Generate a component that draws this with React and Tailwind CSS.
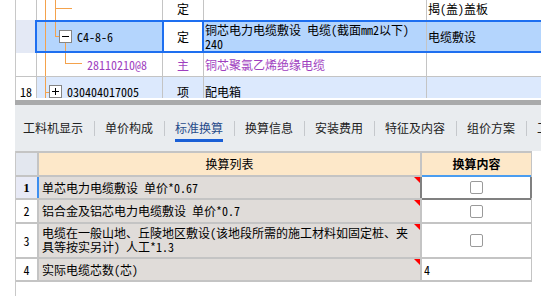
const OR = "#f4a24c";

function TreeBox({ plus }) {
  return (
    <span className="inline-flex w-[13px] h-[13px] border border-[#858585] bg-white shrink-0 items-center justify-center">
      <svg width="11" height="11" viewBox="0 0 11 11">
        <line x1="2" y1="5.5" x2="9" y2="5.5" stroke="#000" strokeWidth="1" />
        {plus && <line x1="5.5" y1="2" x2="5.5" y2="9" stroke="#000" strokeWidth="1" />}
      </svg>
    </span>
  );
}

function RedMark() {
  return (
    <svg className="absolute top-0 right-0" width="6" height="6" viewBox="0 0 6 6">
      <polygon points="0,0 6,0 6,6" fill="#ff0000" />
    </svg>
  );
}

function Check() {
  return <div className="w-[13px] h-[13px] border border-[#9a9a9a] rounded-[2px] bg-white" />;
}

function Tab({ label, active, last }) {
  return (
    <div className="flex items-center h-full">
      <div className={"relative h-full flex items-center " + (active ? "text-[#274b8a]" : "text-[#222]")}>
        {label}
        {active && <div className="absolute left-0 right-0 top-[34px] h-[3px] bg-[#1a5fd6]" />}
      </div>
      {!last && <div className="w-px h-[15px] bg-[#c5c8cc] ml-[11px] mr-[10px]" />}
    </div>
  );
}

export default function App() {
  const mono = "font-['Noto_Sans_Mono_CJK_SC','Noto_Sans_CJK_SC',sans-serif]";
  return (
    <div className={"w-[541px] h-[296px] flex flex-col bg-white overflow-hidden text-[12px] text-black " + mono}>
      {/* top grid */}
      <div className="h-[98px] overflow-hidden ml-[15px] border-l border-[#c8c8c8] flex flex-col shrink-0">
        {/* row A */}
        <div className="flex h-[20px] shrink-0 bg-white">
          <div className="w-[21px] border-r border-[#c4c4c4]" />
          <div className="relative w-[126px] border-r border-[#c4c4c4]">
            <svg className="absolute left-0 top-0" width="125" height="20">
              <line x1="8.5" y1="0" x2="8.5" y2="20" stroke={OR} />
              <line x1="18.5" y1="0" x2="18.5" y2="20" stroke={OR} />
              <line x1="18" y1="8.5" x2="35" y2="8.5" stroke={OR} />
            </svg>
          </div>
          <div className="w-[41px] border-r border-[#c4c4c4] flex items-center justify-center pb-[2px]">定</div>
          <div className="w-[223px] border-r border-[#c4c4c4]" />
          <div className="flex-1 flex items-center pl-[1px] pb-[2px]">揭(盖)盖板</div>
        </div>
        {/* selected row */}
        <div className="flex h-[33px] shrink-0">
          <div className="w-[19px] bg-[#e4e9f5]" />
          <div className="flex flex-1 border-2 border-r-0 border-[#1e6ff0] bg-[#b4d5fd]">
            <div className="relative w-[127px] border-r-2 border-[#1e6ff0] flex items-center pl-[22px]">
              <svg className="absolute left-0 top-0" width="125" height="29">
                <line x1="8.5" y1="0" x2="8.5" y2="29" stroke={OR} />
                <line x1="18.5" y1="0" x2="18.5" y2="14.5" stroke={OR} />
                <line x1="18" y1="14.5" x2="22" y2="14.5" stroke={OR} />
                <line x1="28.5" y1="20" x2="28.5" y2="29" stroke={OR} />
              </svg>
              <span className="relative"><TreeBox /></span>
              <span className="relative ml-[5px]">C4-8-6</span>
            </div>
            <div className="w-[40px] border-r-2 border-[#1e6ff0] bg-white flex items-center justify-center">定</div>
            <div className="w-[223px] border-r border-[#c4c4c4] flex flex-col justify-center pl-[1px] leading-[14px]">
              <div>铜芯电力电缆敷设 电缆(截面mm2以下)</div>
              <div>240</div>
            </div>
            <div className="flex-1 flex items-center pl-[1px] pt-[1px]">电缆敷设</div>
          </div>
        </div>
        {/* purple row */}
        <div className="flex h-[24px] shrink-0 border-b border-[#c4c4c4] bg-white text-[#9f3fbf]">
          <div className="w-[21px] border-r border-[#c4c4c4]" />
          <div className="relative w-[126px] border-r border-[#c4c4c4] flex items-center pl-[50px]">
            <svg className="absolute left-0 top-0" width="125" height="23">
              <line x1="8.5" y1="0" x2="8.5" y2="23" stroke={OR} />
              <line x1="28.5" y1="0" x2="28.5" y2="10.5" stroke={OR} />
              <line x1="28" y1="10.5" x2="45" y2="10.5" stroke={OR} />
            </svg>
            <span className="relative">28110210@8</span>
          </div>
          <div className="w-[41px] border-r border-[#c4c4c4] flex items-center justify-center">主</div>
          <div className="w-[223px] border-r border-[#c4c4c4] flex items-center pl-[1px]">铜芯聚氯乙烯绝缘电缆</div>
          <div className="flex-1" />
        </div>
        {/* row 18 (partly scrolled out of view) */}
        <div className="flex h-[21px] shrink-0 leading-[12px]">
          <div className="w-[21px] border-r border-[#c4c4c4] bg-white flex items-end justify-center">18</div>
          <div className="flex flex-1 bg-[#dce9fd]">
            <div className="relative w-[126px] border-r border-[#c4c4c4] flex items-end pl-[12px]">
              <svg className="absolute left-0 top-0" width="125" height="21">
                <line x1="8.5" y1="0" x2="8.5" y2="21" stroke={OR} />
                <line x1="8" y1="15.5" x2="12" y2="15.5" stroke={OR} />
              </svg>
              <span className="relative flex"><TreeBox plus /></span>
              <span className="relative ml-[5px]">030404017005</span>
            </div>
            <div className="w-[41px] border-r border-[#c4c4c4] flex items-end justify-center">项</div>
            <div className="w-[223px] border-r border-[#c4c4c4] flex items-end pl-[1px]">配电箱</div>
            <div className="flex-1" />
          </div>
        </div>
      </div>
      <div className="h-[2px] shrink-0 ml-[15px] border-l border-[#c8c8c8]" />
      <div className="h-[5px] shrink-0 ml-[15px] bg-[#a9aaab]" />

      {/* tabs */}
      <div className="h-[46px] shrink-0 ml-[15px] bg-[#e9ecef] flex items-center pl-[8px] overflow-hidden whitespace-nowrap font-['Noto_Sans_CJK_SC',sans-serif] text-[12px]">
        <Tab label="工料机显示" />
        <Tab label="单价构成" />
        <Tab label="标准换算" active />
        <Tab label="换算信息" />
        <Tab label="安装费用" />
        <Tab label="特征及内容" />
        <Tab label="组价方案" />
        <Tab label="工料机" last />
      </div>

      {/* lower table */}
      <div className="flex-1 ml-[15px] border-l border-[#c8c8c8] bg-white">
        <div className="w-[516px] grid grid-cols-[21px_381px_109px] grid-rows-[22px_21px_22px_33px_21px] gap-[2px] bg-[#c4c4c4] border-t-2 border-r border-b-2 border-[#c4c4c4]">
          {/* header */}
          <div className="bg-[#e3e7ef]" />
          <div className="bg-[#fde8c9] flex items-center justify-center">换算列表</div>
          <div className="bg-[#fde8c9] flex items-center justify-center font-bold font-['Noto_Sans_CJK_SC',sans-serif]">换算内容</div>
          {/* row 1 */}
          <div className="bg-[#e8eaf6] flex items-center justify-center font-bold font-['Liberation_Serif',serif] text-[13px]">1</div>
          <div className="relative bg-[#e0dcd9] flex items-center pl-[3px] shadow-[-2px_0_0_#3d8ef0]">
            单芯电力电缆敷设 单价*0.67
            <RedMark />
          </div>
          <div className="relative bg-white flex items-center justify-center shadow-[0_-2px_0_#4a9df0,-2px_0_0_#808080,1px_0_0_#808080,inset_-1px_0_0_#808080,0_2px_0_#808080]">
            <Check />
          </div>
          {/* row 2 */}
          <div className="bg-white flex items-center justify-center">2</div>
          <div className="relative bg-[#e0dcd9] flex items-center pl-[3px]">
            铝合金及铝芯电力电缆敷设 单价*0.7
            <RedMark />
          </div>
          <div className="bg-white flex items-center justify-center">
            <Check />
          </div>
          {/* row 3 */}
          <div className="bg-white flex items-center justify-center">3</div>
          <div className="relative bg-[#e0dcd9] flex flex-col justify-center pl-[3px] leading-[14px] pb-[1px]">
            <div>电缆在一般山地、丘陵地区敷设(该地段所需的施工材料如固定桩、夹</div>
            <div>具等按实另计) 人工*1.3</div>
            <RedMark />
          </div>
          <div className="bg-white flex items-center justify-center">
            <Check />
          </div>
          {/* row 4 */}
          <div className="bg-white flex items-center justify-center">4</div>
          <div className="relative bg-[#e0dcd9] flex items-center pl-[3px]">
            实际电缆芯数(芯)
            <RedMark />
          </div>
          <div className="bg-white flex items-center pl-[2px]">4</div>
        </div>
      </div>
    </div>
  );
}
